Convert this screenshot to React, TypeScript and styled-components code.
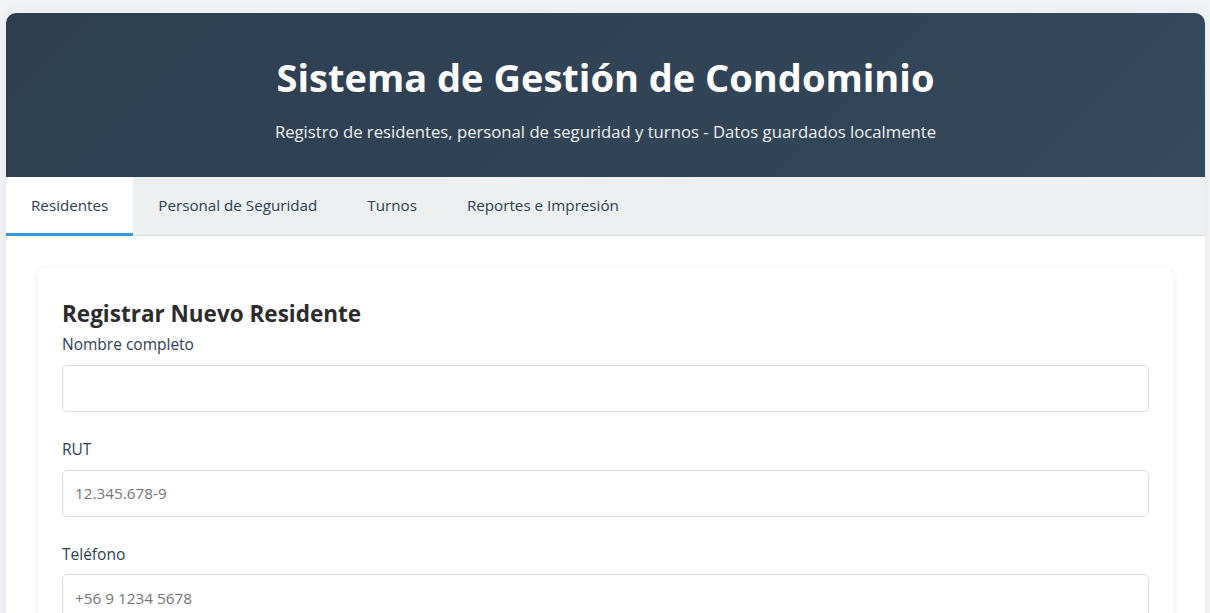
import React from 'react';
import styled, { createGlobalStyle } from 'styled-components';

const GlobalStyle = createGlobalStyle`
  * {
    box-sizing: border-box;
  }
  body {
    margin: 0;
    padding: 13px 5px 0 6px;
    background: #f3f4f7;
    font-family: 'Open Sans', 'Noto Sans', sans-serif;
    line-height: 1.6;
    color: #333333;
  }
`;

const tabs = ['Residentes', 'Personal de Seguridad', 'Turnos', 'Reportes e Impresión'];

const fields = [
  { label: 'Nombre completo', placeholder: '' },
  { label: 'RUT', placeholder: '12.345.678-9' },
  { label: 'Teléfono', placeholder: '+56 9 1234 5678' },
];

const App = () => {
  return (
    <>
      <GlobalStyle />
      <Container>
        <Header>
          <h1>Sistema de Gestión de Condominio</h1>
          <p>Registro de residentes, personal de seguridad y turnos - Datos guardados localmente</p>
        </Header>
        <Tabs>
          {tabs.map((tab, i) => (
            <Tab key={tab} $active={i === 0}>
              {tab}
            </Tab>
          ))}
        </Tabs>
        <Content>
          <Card>
            <CardTitle>Registrar Nuevo Residente</CardTitle>
            {fields.map((field) => (
              <FormGroup key={field.label}>
                <Label>{field.label}</Label>
                <Input type="text" placeholder={field.placeholder} />
              </FormGroup>
            ))}
          </Card>
        </Content>
      </Container>
    </>
  );
};

export default App;

const Container = styled.div`
  background: #ffffff;
  border-radius: 10px;
  overflow: hidden;
  box-shadow: 0 0 20px rgba(0, 0, 0, 0.06);
  min-height: 640px;
`;

const Header = styled.div`
  height: 164px;
  background: linear-gradient(135deg, #2c3e50, #34495e);
  color: #ffffff;
  text-align: center;
  padding-top: 42px;
  h1 {
    margin: 0;
    font-size: 38px;
    font-weight: 700;
    line-height: 1.2;
  }
  p {
    margin: 18px 0 0;
    font-size: 16.7px;
    color: #ecf0f1;
  }
`;

const Tabs = styled.div`
  display: flex;
  background: #ecf0f1;
  border-bottom: 1px solid #dddddd;
`;

const Tab = styled.div<{ $active?: boolean }>`
  height: 59px;
  padding: 0 25px;
  display: flex;
  align-items: center;
  font-size: 15.2px;
  color: #2c3e50;
  cursor: pointer;
  background: ${({ $active }) => ($active ? '#ffffff' : 'transparent')};
  border-bottom: 3px solid ${({ $active }) => ($active ? '#3498db' : 'transparent')};
  padding-top: 1px;
  margin-bottom: -1px;
`;

const Content = styled.div`
  padding: 32px;
`;

const Card = styled.div`
  background: #ffffff;
  border-radius: 8px;
  box-shadow: 0 2px 10px rgba(0, 0, 0, 0.08);
  padding: 28px 24px 24px;
`;

const CardTitle = styled.h2`
  margin: 0;
  font-size: 22.5px;
  font-weight: 700;
  color: #2c2c2c;
`;

const FormGroup = styled.div`
  margin-bottom: 25px;
`;

const Label = styled.label`
  display: block;
  font-size: 15.5px;
  color: #2c3e50;
  margin-bottom: 8px;
`;

const Input = styled.input`
  display: block;
  width: 100%;
  height: 47px;
  padding: 0 12px;
  border: 1px solid #dddddd;
  border-radius: 5px;
  font-family: inherit;
  font-size: 15.3px;
  color: #333333;
  &::placeholder {
    color: #757575;
  }
`;
